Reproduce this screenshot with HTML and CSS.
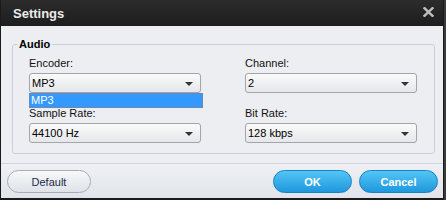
FILE: index.html
```html
<!DOCTYPE html>
<html>
<head>
<meta charset="utf-8">
<link rel="stylesheet" href="styles.css">
</head>
<body>
<div class="window">
  <div class="titlebar">
    <span class="title">Settings</span>
    <svg class="close" width="11" height="10" viewBox="0 0 11 10"><path d="M1.5 1.2 L9.5 8.8 M9.5 1.2 L1.5 8.8" stroke="#bdbdbd" stroke-width="2.4" stroke-linecap="square" fill="none"/></svg>
  </div>
  <div class="content">
    <fieldset class="group">
      <legend class="legend">Audio</legend>
      <div class="grid">
        <div class="field">
          <label class="label">Encoder:</label>
          <div class="select"><span>MP3</span><i class="arrow"></i></div>
          <ul class="dropdown"><li class="option selected">MP3</li></ul>
        </div>
        <div class="field">
          <label class="label">Channel:</label>
          <div class="select"><span>2</span><i class="arrow"></i></div>
        </div>
        <div class="field">
          <label class="label">Sample Rate:</label>
          <div class="select"><span>44100 Hz</span><i class="arrow"></i></div>
        </div>
        <div class="field">
          <label class="label">Bit Rate:</label>
          <div class="select"><span>128 kbps</span><i class="arrow"></i></div>
        </div>
      </div>
    </fieldset>
  </div>
  <div class="footer">
    <button class="btn btn-gray">Default</button>
    <span class="spacer"></span>
    <button class="btn btn-blue">OK</button>
    <button class="btn btn-blue">Cancel</button>
  </div>
</div>
</body>
</html>
```
FILE: styles.css
```css
html, body {
  margin: 0;
  padding: 0;
}
body {
  width: 446px;
  height: 200px;
  background: #3a3a3a;
  font-family: "Liberation Sans", Arial, sans-serif;
  overflow: hidden;
}
.window {
  box-sizing: border-box;
  width: 444px;
  height: 200px;
  border: 1px solid #1a1a1a;
  border-top: 0;
  border-bottom-width: 2px;
  display: flex;
  flex-direction: column;
  background: #edeef2;
}
.titlebar {
  height: 26px;
  flex: none;
  display: flex;
  align-items: center;
  justify-content: space-between;
  padding: 0 9px 0 12px;
  background: linear-gradient(#2c2c2c, #1d1d1e);
}
.title {
  color: #ececec;
  font-weight: bold;
  font-size: 13px;
  line-height: 16px;
  margin-top: 1px;
}
.close {
  display: block;
  margin-top: -2px;
}
.content {
  flex: none;
  height: 137px;
  box-sizing: border-box;
  padding-top: 12px;
}
.group {
  box-sizing: border-box;
  width: 423px;
  margin: 0 0 0 11px;
  padding: 6px 16px 10px 16px;
  border: 1px solid #cbced5;
  border-radius: 3px;
  min-inline-size: 0;
}
.legend {
  margin-left: -12px;
  padding: 0 2px;
  font-size: 11px;
  font-weight: bold;
  line-height: 13px;
  color: #000;
}
.grid {
  display: grid;
  grid-template-columns: 172px 172px;
  column-gap: 44px;
  row-gap: 14px;
}
.field {
  position: relative;
  display: flex;
  flex-direction: column;
  gap: 3px;
}
.label {
  font-size: 11px;
  line-height: 13px;
  color: #111;
}
.select {
  box-sizing: border-box;
  height: 20px;
  border: 1px solid #a2a5ab;
  border-radius: 3px;
  background: linear-gradient(#fafafa, #e6e7ea);
  display: flex;
  align-items: center;
  justify-content: space-between;
  padding: 0 7px 0 2px;
  font-size: 11px;
  color: #000;
}
.arrow {
  width: 0;
  height: 0;
  border-left: 4px solid transparent;
  border-right: 4px solid transparent;
  border-top: 4px solid #333;
  margin-top: 1px;
}
.dropdown {
  position: absolute;
  left: 0;
  top: 36px;
  width: 174px;
  box-sizing: border-box;
  margin: 0;
  padding: 0;
  list-style: none;
  border: 1px solid #7088ad;
  background: #fff;
}
.option {
  height: 13px;
  line-height: 13px;
  padding-left: 1px;
  font-size: 11px;
}
.option.selected {
  background: #3399ff;
  color: #fff;
}
.footer {
  flex: 1;
  display: flex;
  align-items: flex-start;
  gap: 7px;
  padding: 6px 5px 0 6px;
  border-top: 1px solid #d2d4d9;
  background: linear-gradient(#eef0f4, #e1e4ea);
}
.spacer {
  flex: 1;
}
.btn {
  height: 23px;
  width: 79px;
  border-radius: 12px;
  font-family: "Liberation Sans", Arial, sans-serif;
  font-size: 11px;
  padding: 0;
  cursor: default;
}
.btn-gray {
  width: 84px;
  border: 1px solid #a8acb4;
  background: linear-gradient(#f7f8fa, #dfe2e8);
  color: #1b2a4e;
}
.btn-blue {
  border: 1px solid #1a80c4;
  background: linear-gradient(#53c6f6, #1f97dd);
  color: #fff;
  font-weight: bold;
}
```
